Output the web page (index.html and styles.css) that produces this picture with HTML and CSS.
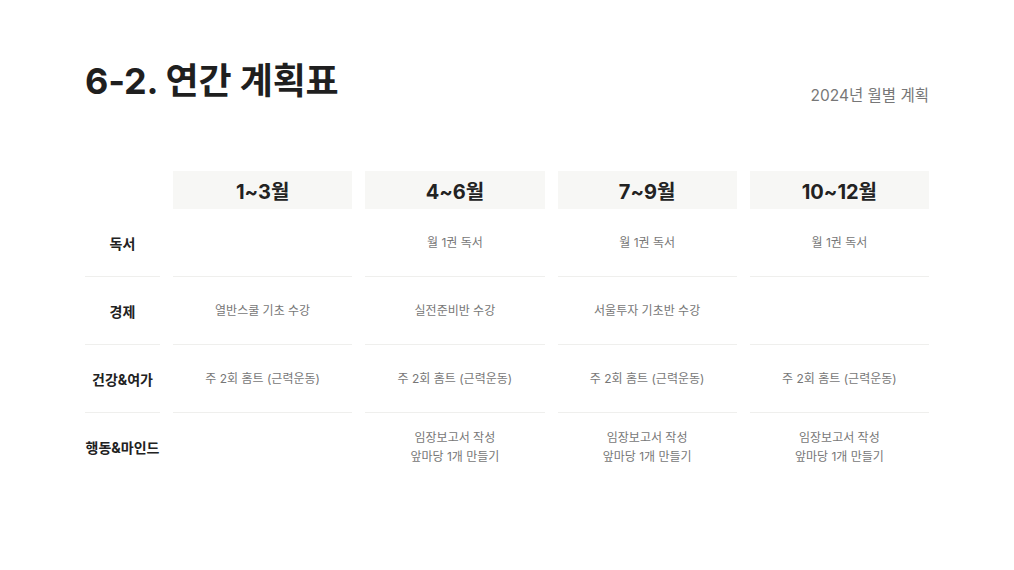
FILE: index.html
```html
<!DOCTYPE html>
<html lang="ko">
<head>
    <meta charset="UTF-8">
    <meta name="viewport" content="width=device-width, initial-scale=1.0">
    <title>6-2. 연간 계획표</title>
    <link rel="stylesheet" href="styles.css">
</head>
<body>
    <div class="page">
        <div class="page-head">
            <h1>6-2. 연간 계획표</h1>
            <div class="subtitle">2024년 월별 계획</div>
        </div>

        <div class="plan">
            <div class="corner"></div>
            <div class="quarter">1~3월</div>
            <div class="quarter">4~6월</div>
            <div class="quarter">7~9월</div>
            <div class="quarter">10~12월</div>

            <div class="label">독서</div>
            <div class="cell"></div>
            <div class="cell">월 1권 독서</div>
            <div class="cell">월 1권 독서</div>
            <div class="cell">월 1권 독서</div>

            <div class="label">경제</div>
            <div class="cell">열반스쿨 기초 수강</div>
            <div class="cell">실전준비반 수강</div>
            <div class="cell">서울투자 기초반 수강</div>
            <div class="cell"></div>

            <div class="label">건강&amp;여가</div>
            <div class="cell">주 2회 홈트 (근력운동)</div>
            <div class="cell">주 2회 홈트 (근력운동)</div>
            <div class="cell">주 2회 홈트 (근력운동)</div>
            <div class="cell">주 2회 홈트 (근력운동)</div>

            <div class="label last">행동&amp;마인드</div>
            <div class="cell last"></div>
            <div class="cell last">임장보고서 작성<br>앞마당 1개 만들기</div>
            <div class="cell last">임장보고서 작성<br>앞마당 1개 만들기</div>
            <div class="cell last">임장보고서 작성<br>앞마당 1개 만들기</div>
        </div>
    </div>
</body>
</html>
```

FILE: styles.css
```css
body {
    margin: 0;
    background: #ffffff;
    color: #222;
    font-family: 'Inter', 'Noto Sans CJK KR', sans-serif;
}
.page {
    width: 844px;
    padding: 56px 85px 0 85px;
}
.page-head {
    display: flex;
    justify-content: space-between;
    align-items: flex-end;
}
h1 {
    margin: 0;
    font-size: 36px;
    font-weight: 700;
    line-height: 50px;
    color: #1f1f1f;
    letter-spacing: -0.2px;
}
.subtitle {
    font-size: 15.5px;
    color: #777;
    line-height: 20px;
}
.plan {
    margin-top: 65px;
    display: grid;
    grid-template-columns: 75px repeat(4, 1fr);
    column-gap: 13px;
}
.quarter {
    background: #f7f7f5;
    height: 38px;
    display: flex;
    align-items: center;
    justify-content: center;
    font-size: 20px;
    font-weight: 700;
    color: #222;
}
.label,
.cell {
    height: 67px;
    border-bottom: 1px solid #efefed;
    display: flex;
    align-items: center;
    justify-content: center;
    text-align: center;
}
.label {
    font-size: 14px;
    font-weight: 700;
    color: #222;
}
.cell {
    font-size: 12px;
    line-height: 19px;
    color: #777;
}
.last {
    border-bottom: none;
    height: 68px;
}
```
